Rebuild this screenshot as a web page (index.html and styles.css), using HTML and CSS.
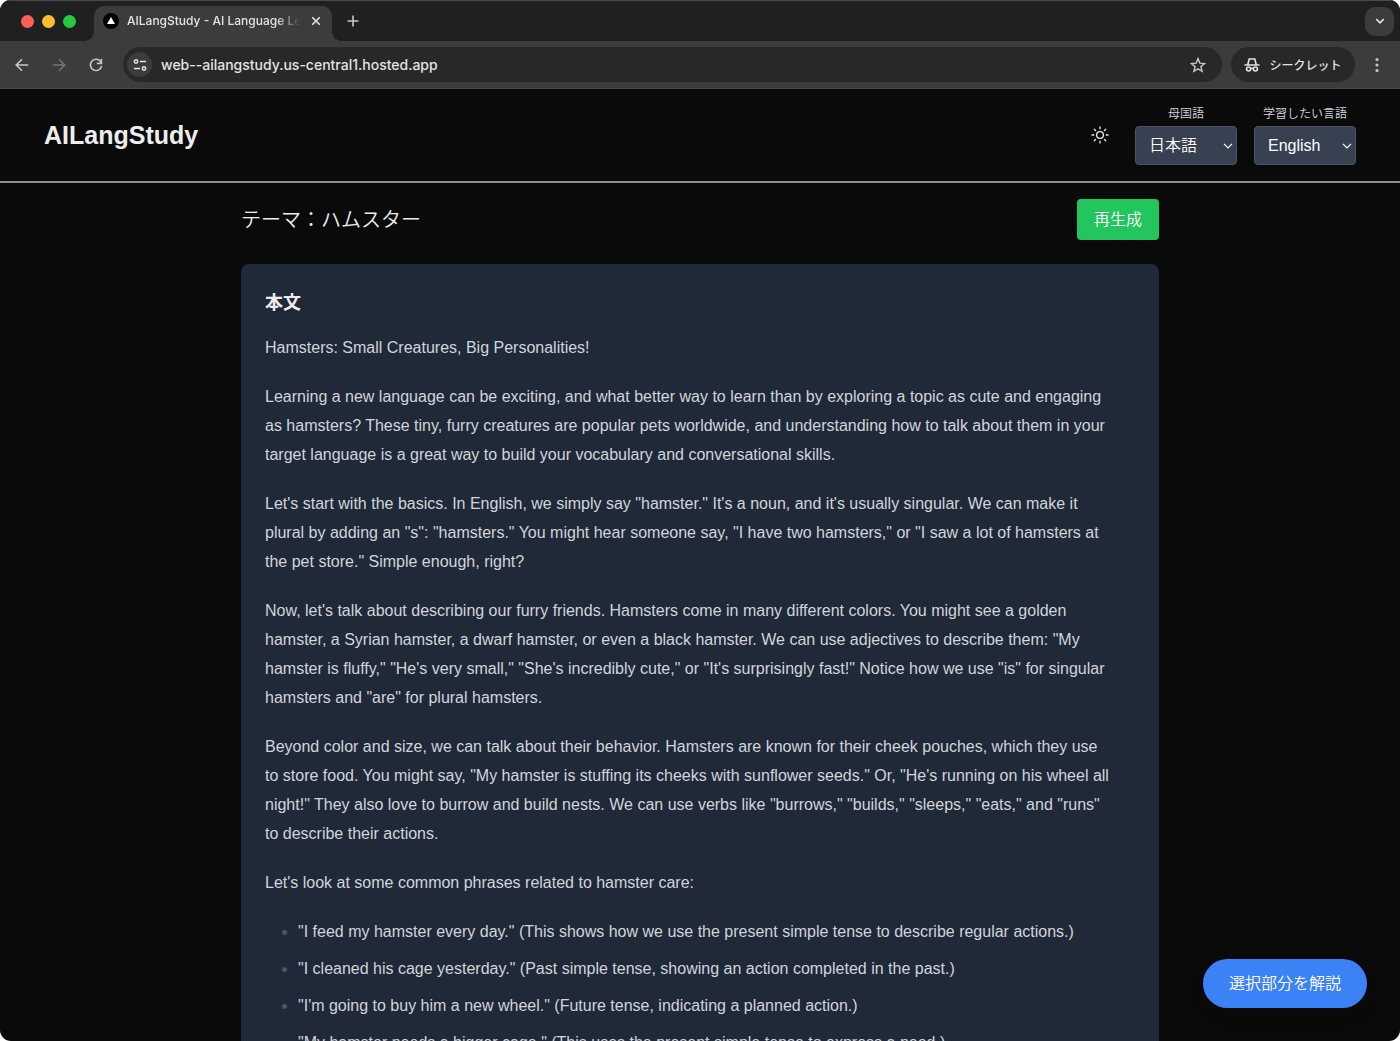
FILE: index.html
```html
<!DOCTYPE html>
<html lang="ja">
<head>
<meta charset="utf-8">
<meta name="viewport" content="width=device-width, initial-scale=1">
<title>AILangStudy - AI Language Learning</title>
<link rel="stylesheet" href="styles.css">
</head>
<body>
<div class="window">
  <div class="tabstrip">
    <div class="lights"><span class="light red"></span><span class="light yellow"></span><span class="light green"></span></div>
    <div class="tab">
      <svg class="favicon" width="16" height="16" viewBox="0 0 16 16" aria-hidden="true"><circle cx="8" cy="8" r="8" fill="#000"/><path d="M8 4l4 7H4z" fill="#fff"/></svg>
      <span class="tab-title">AILangStudy - AI Language Le</span>
      <button class="tab-close" aria-label="タブを閉じる"><svg width="10" height="10" viewBox="0 0 10 10"><path d="M1.2 1.2l7.6 7.6M8.8 1.2L1.2 8.8" stroke="#e3e3e3" stroke-width="1.6"/></svg></button>
    </div>
    <button class="new-tab" aria-label="新しいタブ"><svg width="12" height="12" viewBox="0 0 12 12"><path d="M6 .5v11M.5 6h11" stroke="#c7c7c7" stroke-width="1.6"/></svg></button>
    <button class="tab-search" aria-label="タブを検索"><svg width="10" height="8" viewBox="0 0 10 8"><path d="M1.2 2l3.8 3.8L8.8 2" fill="none" stroke="#e3e3e3" stroke-width="1.7"/></svg></button>
  </div>

  <div class="toolbar">
    <div class="nav">
      <button class="icon-btn" aria-label="戻る"><svg width="14" height="14" viewBox="0 0 14 14"><path d="M13.2 7H1.5M7 1.2L1.2 7 7 12.8" fill="none" stroke="#c7c7c7" stroke-width="1.6"/></svg></button>
      <button class="icon-btn" aria-label="進む"><svg width="14" height="14" viewBox="0 0 14 14"><path d="M.8 7h11.7M7 1.2L12.8 7 7 12.8" fill="none" stroke="#757575" stroke-width="1.6"/></svg></button>
      <button class="icon-btn" aria-label="再読み込み"><svg width="14" height="14" viewBox="0 0 14 14"><path d="M12 4.2A5.6 5.6 0 1 0 12.6 7.8" fill="none" stroke="#c7c7c7" stroke-width="1.6"/><path d="M12.4.8v4.600H7.8" fill="none" stroke="#c7c7c7" stroke-width="1.6"/></svg></button>
    </div>
    <div class="omnibox">
      <button class="site-info" aria-label="サイト情報"><svg width="14" height="14" viewBox="0 0 14 14" fill="none" stroke="#e3e3e3" stroke-width="1.5"><circle cx="3" cy="3.5" r="1.7"/><path d="M6.800 3.500H13M1 10.500h6"/><circle cx="11" cy="10.5" r="1.7"/></svg></button>
      <input class="url" type="text" aria-label="アドレス" value="web--ailangstudy.us-central1.hosted.app">
      <button class="star" aria-label="ブックマーク"><svg width="16" height="16" viewBox="0 0 16 16"><path d="M8 1.600l1.800 4.500 4.800.4-3.700 3.100 1.200 4.700L8 11.800l-4.100 2.500 1.200-4.700-3.700-3.100 4.800-.4z" fill="none" stroke="#c7c7c7" stroke-width="1.4"/></svg></button>
    </div>
    <button class="incognito"><svg width="16" height="16" viewBox="0 0 16 16" fill="none" stroke="#e3e3e3" stroke-width="1.600" aria-hidden="true"><path d="M.5 8h15M3.700 8L5.200 2h5.600l1.500 6"/><circle cx="4.600" cy="12" r="2"/><circle cx="11.400" cy="12" r="2"/><path d="M6.500 11.700q1.500-.8 3 0"/></svg>シークレット</button>
    <button class="icon-btn menu" aria-label="メニュー"><svg width="4" height="16" viewBox="0 0 4 16" fill="#c7c7c7"><circle cx="2" cy="2.500" r="1.600"/><circle cx="2" cy="8" r="1.600"/><circle cx="2" cy="13.500" r="1.600"/></svg></button>
  </div>

  <div class="page">
    <header class="site-header">
      <h1 class="logo">AILangStudy</h1>
      <div class="controls">
        <button class="theme" aria-label="テーマ切り替え"><svg width="18" height="18" viewBox="0 0 18 18" fill="none" stroke="#ededed" stroke-width="1.300" stroke-linecap="round"><circle cx="9" cy="9" r="3.400"/><path d="M9 1v1.800M9 15.200V17M1 9h1.800M15.200 9H17M3.300 3.300l1.300 1.300M13.400 13.400l1.300 1.300M3.300 14.700l1.300-1.300M13.400 4.600l1.300-1.300"/></svg></button>
        <div class="field">
          <label for="native">母国語</label>
          <div class="select-wrap">
            <select id="native"><option>日本語</option><option>English</option></select>
            <svg class="chevron" width="10" height="6" viewBox="0 0 10 6"><path d="M1 .8l4 4 4-4" fill="none" stroke="#fff" stroke-width="1.200"/></svg>
          </div>
        </div>
        <div class="field">
          <label for="target">学習したい言語</label>
          <div class="select-wrap">
            <select id="target"><option>English</option><option>日本語</option></select>
            <svg class="chevron" width="10" height="6" viewBox="0 0 10 6"><path d="M1 .8l4 4 4-4" fill="none" stroke="#fff" stroke-width="1.200"/></svg>
          </div>
        </div>
      </div>
    </header>

    <main class="content">
      <div class="topic-row">
        <p class="topic">テーマ：ハムスター</p>
        <button class="regenerate">再生成</button>
      </div>
      <article class="card">
        <h2>本文</h2>
        <div class="prose">
          <p>Hamsters: Small Creatures, Big Personalities!</p>
          <p>Learning a new language can be exciting, and what better way to learn than by exploring a topic as cute and engaging as hamsters? These tiny, furry creatures are popular pets worldwide, and understanding how to talk about them in your target language is a great way to build your vocabulary and conversational skills.</p>
          <p>Let's start with the basics. In English, we simply say "hamster." It's a noun, and it's usually singular. We can make it plural by adding an "s": "hamsters." You might hear someone say, "I have two hamsters," or "I saw a lot of hamsters at the pet store." Simple enough, right?</p>
          <p>Now, let's talk about describing our furry friends. Hamsters come in many different colors. You might see a golden hamster, a Syrian hamster, a dwarf hamster, or even a black hamster. We can use adjectives to describe them: "My hamster is fluffy," "He's very small," "She's incredibly cute," or "It's surprisingly fast!" Notice how we use "is" for singular hamsters and "are" for plural hamsters.</p>
          <p>Beyond color and size, we can talk about their behavior. Hamsters are known for their cheek pouches, which they use to store food. You might say, "My hamster is stuffing its cheeks with sunflower seeds." Or, "He's running on his wheel all night!" They also love to burrow and build nests. We can use verbs like "burrows," "builds," "sleeps," "eats," and "runs" to describe their actions.</p>
          <p>Let's look at some common phrases related to hamster care:</p>
          <ul>
            <li>"I feed my hamster every day." (This shows how we use the present simple tense to describe regular actions.)</li>
            <li>"I cleaned his cage yesterday." (Past simple tense, showing an action completed in the past.)</li>
            <li>"I'm going to buy him a new wheel." (Future tense, indicating a planned action.)</li>
            <li>"My hamster needs a bigger cage." (This uses the present simple tense to express a need.)</li>
          </ul>
        </div>
      </article>
    </main>
  </div>
  <button class="explain">選択部分を解説</button>
</div>
</body>
</html>
```
FILE: styles.css
```css
* { box-sizing: border-box; }

body {
  margin: 0;
  background: #fff;
  color: #ededed;
  font-family: "Liberation Sans", "Noto Sans CJK JP", sans-serif;
  font-size: 16px;
}

button, input, select { font: inherit; color: inherit; margin: 0; }

button {
  display: flex;
  align-items: center;
  justify-content: center;
  padding: 0;
  border: 0;
  background: none;
}

svg { display: block; flex: none; }

.window {
  position: relative;
  display: flex;
  flex-direction: column;
  height: 100vh;
  overflow: hidden;
  border-radius: 11px;
  background: #0a0a0a;
}

/* Browser tabs */
.tabstrip {
  flex: none;
  display: flex;
  align-items: center;
  height: 41px;
  padding: 0 6px 0 21px;
  background: #1f2120;
  border-top: 1px solid #484a49;
  font-family: Inter, "Noto Sans CJK JP", sans-serif;
}

.lights { display: flex; gap: 8px; width: 73px; }
.light { width: 13px; height: 13px; border-radius: 50%; }
.red { background: #ff5f57; }
.yellow { background: #febc2e; }
.green { background: #28c840; }

.tab {
  position: relative;
  align-self: flex-end;
  display: flex;
  align-items: center;
  width: 238px;
  height: 35px;
  padding: 0 10px 6px 9px;
  border-radius: 10px 10px 0 0;
  background: #3c3c3c;
}

.tab::before, .tab::after {
  content: "";
  position: absolute;
  bottom: 0;
  width: 10px;
  height: 10px;
}
.tab::before { right: 100%; background: radial-gradient(circle at 0 0, #1f2120 10px, #3c3c3c 10px); }
.tab::after { left: 100%; background: radial-gradient(circle at 100% 0, #1f2120 10px, #3c3c3c 10px); }

.tab-title {
  flex: 1;
  min-width: 0;
  margin: 0 11px 0 8px;
  overflow: hidden;
  white-space: nowrap;
  font-size: 12px;
  font-weight: 500;
  line-height: 18px;
  color: #e3e3e3;
  mask-image: linear-gradient(to right, #000 150px, transparent 173px);
}

.tab-close { width: 12px; height: 16px; }
.new-tab { width: 28px; height: 28px; margin-left: 7px; }
.tab-search { width: 29px; height: 29px; margin-left: auto; border-radius: 10px; background: #3c3c3c; }

/* Browser toolbar */
.toolbar {
  flex: none;
  display: flex;
  align-items: center;
  height: 48px;
  padding: 0 8px 0 7px;
  background: #3c3c3c;
  border-bottom: 1px solid #4a4a4a;
  font-family: Inter, "Noto Sans CJK JP", sans-serif;
}

.nav { display: flex; gap: 7px; }
.icon-btn { width: 30px; height: 30px; }

.omnibox {
  flex: 1;
  display: flex;
  align-items: center;
  height: 35px;
  margin: 0 9px 0 12px;
  padding: 0 16px 0 4px;
  border-radius: 18px;
  background: #282828;
}

.site-info { flex: none; width: 25px; height: 25px; border-radius: 50%; background: #3c3c3c; }

.url {
  flex: 1;
  min-width: 0;
  padding: 0 9px;
  border: 0;
  outline: 0;
  background: none;
  color: #e3e3e3;
  font-size: 14px;
  font-weight: 500;
}

.incognito {
  gap: 9px;
  width: 124px;
  height: 35px;
  border-radius: 18px;
  background: #282828;
  color: #e3e3e3;
  font-size: 12px;
  font-weight: 500;
}

.menu { margin-left: 7px; }

/* Page */
.page { flex: 1; min-height: 0; overflow: auto; scrollbar-width: none; }

.site-header {
  display: flex;
  align-items: center;
  justify-content: space-between;
  height: 94px;
  padding: 0 44px;
  border-bottom: 2px solid #8e8e8e;
}

.logo { margin: 0; font-size: 25px; line-height: 32px; }

.controls { display: flex; align-items: center; gap: 17px; }
.theme { width: 36px; height: 36px; }

.field { display: flex; flex-direction: column; align-items: center; gap: 4px; }
.field label { font-size: 12px; line-height: 16px; font-weight: 350; color: #d1d5db; }

.select-wrap { position: relative; }
.select-wrap select {
  display: block;
  appearance: none;
  width: 102px;
  height: 39px;
  padding: 0 24px 0 13px;
  border: 1px solid #4b5563;
  border-radius: 4px;
  background: #374151;
  color: #fff;
  font-weight: 350;
}

.chevron { position: absolute; right: 4px; top: 17px; pointer-events: none; }

.content { width: 100%; max-width: 918px; margin: 0 auto; padding-top: 16px; }

.topic-row { display: flex; align-items: center; justify-content: space-between; margin-bottom: 24px; }
.topic { margin: 0; font-size: 20px; line-height: 28px; font-weight: 350; }
.regenerate { width: 82px; height: 41px; padding-bottom: 4px; border-radius: 4px; background: #22c55e; color: #fff; font-weight: 350; }

.card { padding: 24px; border-radius: 8px; background: #1f2937; }
.card h2 { margin: 0 0 15px; font-size: 18px; line-height: 30px; }

.prose { max-width: 848px; line-height: 29px; color: #d1d5db; }
.prose p { margin: 0 0 20px; }
.prose ul { margin: 0; padding-left: 33px; }
.prose li { margin-bottom: 8px; }
.prose li::marker { color: #4b5563; }

.explain {
  position: absolute;
  right: 33px;
  bottom: 33px;
  width: 164px;
  height: 49px;
  padding-bottom: 4px;
  border-radius: 25px;
  background: #3b82f6;
  color: #fff;
  font-weight: 350;
  box-shadow: 0 10px 15px rgba(0, 0, 0, 0.1);
}
```
